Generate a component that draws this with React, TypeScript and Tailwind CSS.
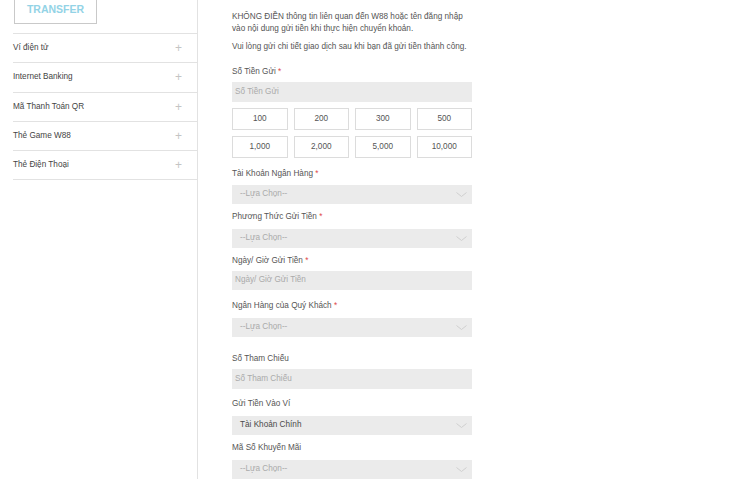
import { ReactNode } from "react";

const menu = ["Ví điện tử", "Internet Banking", "Mã Thanh Toán QR", "Thẻ Game W88", "Thẻ Điện Thoại"];
const amounts = ["100", "200", "300", "500", "1,000", "2,000", "5,000", "10,000"];

function Chevron() {
    return (
        <svg width="11" height="6" viewBox="0 0 11 6" className="text-[#cfcfcf]">
            <path d="M0.5 0.5 L5.5 4.5 L10.5 0.5" fill="none" stroke="currentColor" strokeWidth="1" />
        </svg>
    );
}

function Label({ children, required, className }: { children: ReactNode; required?: boolean; className: string }) {
    return (
        <div className={"h-[12px] leading-[12px] text-[#555] whitespace-nowrap translate-y-[1px] " + className}>
            {children}
            {required && <span className="text-[#e04a4a]"> *</span>}
        </div>
    );
}

function Input({ placeholder, className, h = "h-[20px]" }: { placeholder: string; className: string; h?: string }) {
    return (
        <div className={"w-[240px] bg-[#ebebeb] flex items-center pl-[3px] text-[#aaa] " + h + " " + className}>
            {placeholder}
        </div>
    );
}

function Select({ value = "--Lựa Chọn--", className, dark }: { value?: string; className: string; dark?: boolean }) {
    return (
        <div className={"w-[240px] h-[19px] bg-[#ebebeb] flex items-center justify-between pl-[8px] pr-[5px] " + className}>
            <span className={dark ? "text-[#4a4a4a]" : "text-[#aaa]"}>{value}</span>
            <Chevron />
        </div>
    );
}

export default function App() {
    return (
        <div className="flex w-[750px] h-[479px] bg-white overflow-hidden text-[8.2px]" style={{ fontFamily: "Tahoma, 'Liberation Sans', Arial, sans-serif" }}>
            <aside className="w-[198px] shrink-0 border-r border-[#e2e2e2] pl-[13px] text-[8.2px]">
                <div className="ml-[1px] w-[83px] h-[24px] border-x border-b border-[#c9c9c9] flex items-start justify-center pt-[3px]">
                    <span className="text-[10.5px] font-bold text-[#93d3e6] leading-[13px]">TRANSFER</span>
                </div>
                <div className="mt-[9px] border-t border-[#e2e2e2]">
                    {menu.map((m) => (
                        <div key={m} className="h-[29.3px] border-b border-[#e2e2e2] flex items-center justify-between pr-[15px] text-[#444]">
                            <span>{m}</span>
                            <span className="text-[#c4c4c4] text-[12px] leading-none">+</span>
                        </div>
                    ))}
                </div>
            </aside>
            <main className="pl-[34px] text-[#555]">
                <p className="mt-[11px] leading-[12px] whitespace-nowrap">
                    KHÔNG ĐIỀN thông tin liên quan đến W88 hoặc tên đăng nhập
                    <br />
                    vào nội dung gửi tiền khi thực hiện chuyển khoản.
                </p>
                <p className="mt-[6px] leading-[12px] whitespace-nowrap">
                    Vui lòng gửi chi tiết giao dịch sau khi bạn đã gửi tiền thành công.
                </p>
                <Label required className="mt-[12px]">Số Tiền Gửi</Label>
                <Input placeholder="Số Tiền Gửi" className="mt-[5px]" />
                <div className="mt-[6px] w-[240px] grid grid-cols-4 gap-x-[6px] gap-y-[6px]">
                    {amounts.map((a) => (
                        <div key={a} className="h-[22px] border border-[#dcdcdc] flex items-center justify-center text-[#555]">
                            {a}
                        </div>
                    ))}
                </div>
                <Label required className="mt-[9px]">Tài Khoản Ngân Hàng</Label>
                <Select className="mt-[6px]" />
                <Label required className="mt-[6px]">Phương Thức Gửi Tiền</Label>
                <Select className="mt-[7px]" />
                <Label required className="mt-[6px]">Ngày/ Giờ Gửi Tiền</Label>
                <Input placeholder="Ngày/ Giờ Gửi Tiền" className="mt-[5px]" h="h-[19px]" />
                <Label required className="mt-[9px]">Ngân Hàng của Quý Khách</Label>
                <Select className="mt-[7px]" />
                <Label className="mt-[15px]">Số Tham Chiếu</Label>
                <Input placeholder="Số Tham Chiếu" className="mt-[5px]" />
                <Label className="mt-[8px]">Gửi Tiền Vào Ví</Label>
                <Select value="Tài Khoản Chính" dark className="mt-[7px]" />
                <Label className="mt-[6px]">Mã Số Khuyến Mãi</Label>
                <Select className="mt-[7px]" />
            </main>
        </div>
    );
}
